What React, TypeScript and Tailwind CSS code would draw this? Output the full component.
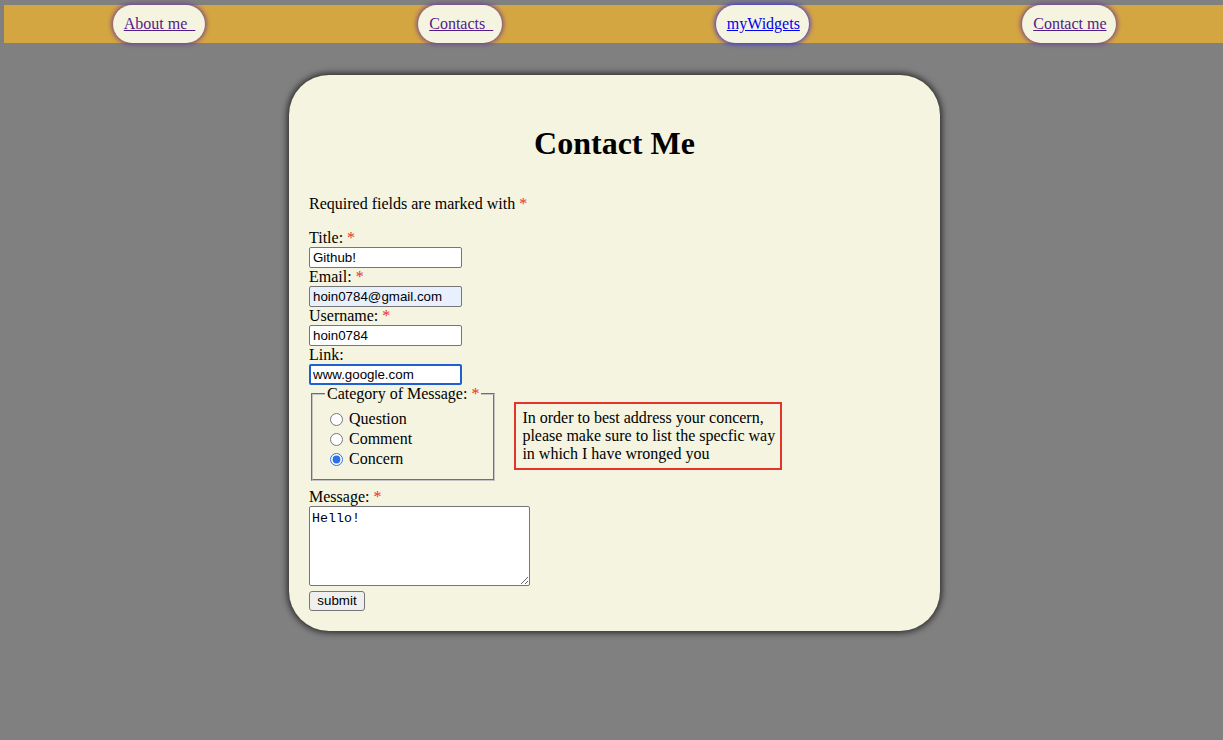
const serif = "font-['Liberation_Serif',serif]"
const sans = "font-['Liberation_Sans',Arial,sans-serif]"

function Star() {
    return <span className="text-[#e8322a]">*</span>
}

function NavPill({ label, width, fresh }: { label: string; width: string; fresh?: boolean }) {
    return (
        <a
            href="#"
            className={`${width} h-[38px] flex items-center pl-[11px] rounded-full bg-[#f4f4e1] underline whitespace-pre ${
                fresh
                    ? 'text-[#0000ee] shadow-[0_0_5px_1px_#3b2fd6]'
                    : 'text-[#551a8b] shadow-[0_0_5px_1px_#6a3c8c]'
            }`}
        >
            {label}
        </a>
    )
}

function Field({ label, value, required, tone }: { label: string; value: string; required?: boolean; tone?: 'fill' | 'focus' }) {
    let box = 'border border-[#767676] bg-white px-[3px]'
    if (tone === 'fill') box = 'border border-[#767676] bg-[#e8f0fe] px-[3px]'
    if (tone === 'focus') box = 'border-2 border-[#1f5fd2] bg-white px-[2px]'
    return (
        <div>
            <div className="leading-[18px] h-[18px]">
                {label} {required && <Star />}
            </div>
            <input
                readOnly
                value={value}
                className={`${sans} block w-[153px] h-[21px] rounded-[2px] text-[13.33px] text-black outline-none ${box}`}
            />
        </div>
    )
}

function Radio({ label, checked }: { label: string; checked?: boolean }) {
    return (
        <label className="flex items-center h-[20px]">
            <input type="radio" name="category" defaultChecked={checked} className="w-[13px] h-[13px] ml-[5px] mr-[6px] mt-[1px] accent-[#2f6fe8]" />
            <span>{label}</span>
        </label>
    )
}

export default function App() {
    return (
        <div className={`${serif} min-h-screen w-full bg-[#808080] pt-[5px] pl-[4px] text-[16px] text-black`}>
            <nav className="h-[38px] bg-[#d4a642] flex flex-row justify-around items-center pl-[2px]">
                <NavPill label={'About me\u00a0\u00a0'} width="w-[92px]" />
                <NavPill label={'Contacts\u00a0\u00a0'} width="w-[84px]" />
                <NavPill label="myWidgets" width="w-[93px]" fresh />
                <NavPill label="Contact me" width="w-[94px]" />
            </nav>

            <div className="flex justify-center pt-[32px] pl-[2px]">
                <div className="w-[651px] h-[556px] rounded-[40px] bg-[#f4f4e1] shadow-[0_0_6px_2px_rgba(0,0,0,0.65)] px-[20px] pt-[51px]">
                    <h1 className="text-[32px] font-bold text-center leading-[35px]">Contact Me</h1>

                    <p className="mt-[34px] leading-[18px]">
                        Required fields are marked with <Star />
                    </p>

                    <form className="mt-[16px]">
                        <Field label="Title:" value="Github!" required />
                        <Field label="Email:" value="hoin0784@gmail.com" required tone="fill" />
                        <Field label="Username:" value="hoin0784" required />
                        <Field label="Link:" value="www.google.com" tone="focus" />

                        <div className="flex flex-row items-start">
                            <fieldset className="w-[184px] mx-[2px] px-[12px] pt-[6px] pb-[10px] border-2 [border-style:groove] border-[#c4c4c4]">
                                <legend className="px-[2px] leading-[18px] whitespace-nowrap">
                                    Category of Message: <Star />
                                </legend>
                                <Radio label="Question" />
                                <Radio label="Comment" />
                                <Radio label="Concern" checked />
                            </fieldset>
                            <div className="ml-[17px] mt-[17px] w-[268px] border-2 border-[#e3342a] pl-[6px] pr-[2px] py-[5px] leading-[18px]">
                                In order to best address your concern, please make sure to list the specfic way in which I have wronged you
                            </div>
                        </div>

                        <div className="mt-[7px] leading-[18px] h-[18px]">
                            Message: <Star />
                        </div>
                        <textarea
                            readOnly
                            defaultValue="Hello!"
                            className="block w-[221px] h-[80px] border border-[#767676] rounded-[2px] bg-white px-[2px] py-[2px] font-['Liberation_Mono',monospace] text-[13.33px] resize outline-none"
                        />
                        <button
                            type="button"
                            className={`${sans} block mt-[5px] w-[56px] h-[20px] border border-[#767676] rounded-[3px] bg-[#efefef] text-[13.33px] leading-none`}
                        >
                            submit
                        </button>
                    </form>
                </div>
            </div>
        </div>
    )
}
